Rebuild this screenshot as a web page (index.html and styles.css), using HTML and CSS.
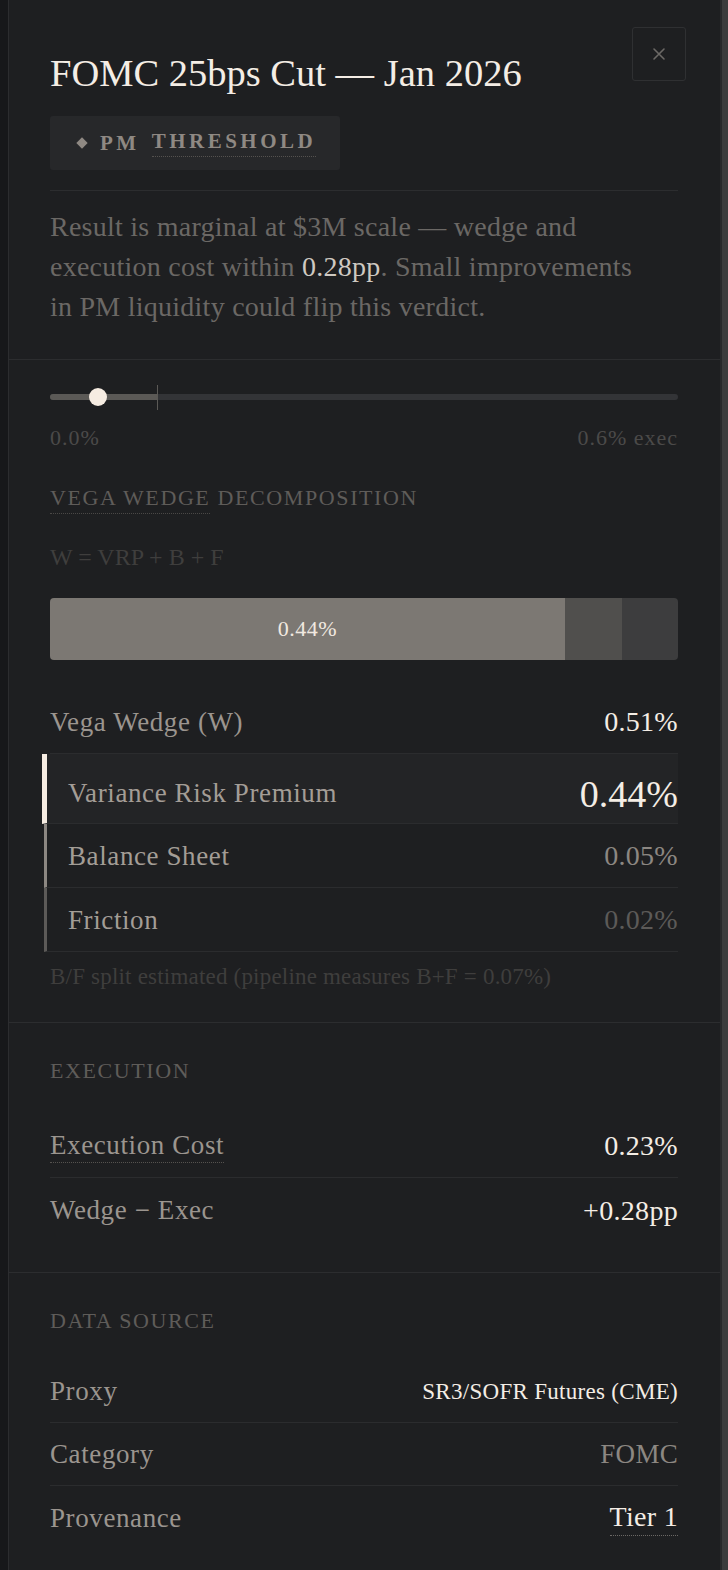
FILE: index.html
```html
<!DOCTYPE html>
<html lang="en">
<head>
    <meta charset="UTF-8">
    <meta name="viewport" content="width=device-width, initial-scale=1.0">
    <title>FOMC 25bps Cut — Jan 2026</title>
    <link rel="stylesheet" href="styles.css">
</head>
<body>
    <div class="shell">
        <div class="gutter"></div>
        <aside class="drawer">
            <button type="button" class="close-btn" aria-label="Close">
                <svg width="14" height="14" viewBox="0 0 14 14"><path d="M2 2 L12 12 M12 2 L2 12" stroke="currentColor" stroke-width="1.6" stroke-linecap="round"/></svg>
            </button>

            <!-- Title, verdict badge and summary -->
            <section class="section head">
                <h1>FOMC 25bps Cut — Jan 2026</h1>
                <div class="badge">
                    <span class="diamond"></span>
                    <span>PM</span>
                    <span class="dotted">THRESHOLD</span>
                </div>
                <hr class="rule">
                <p class="summary">Result is marginal at $3M scale — wedge and execution cost within <span class="hl">0.28pp</span>. Small improvements in PM liquidity could flip this verdict.</p>
            </section>

            <!-- Execution slider and wedge decomposition -->
            <section class="section wedge">
                <div class="slider">
                    <div class="track"><div class="fill" style="width: 107px"></div></div>
                    <span class="tick" style="left: 107px"></span>
                    <span class="thumb" style="left: 39px"></span>
                </div>
                <div class="slider-labels">
                    <span>0.0%</span>
                    <span>0.6% exec</span>
                </div>

                <h3 class="sec-title"><span class="dotted">VEGA WEDGE</span> DECOMPOSITION</h3>
                <div class="formula">W = VRP + B + F</div>

                <div class="stack">
                    <div class="seg seg-vrp" style="width: 82%">0.44%</div>
                    <div class="seg seg-b" style="width: 9.1%"></div>
                    <div class="seg seg-f" style="width: 8.9%"></div>
                </div>

                <div class="row">
                    <span class="label">Vega Wedge (W)</span>
                    <span class="value">0.51%</span>
                </div>
                <div class="row part part-vrp">
                    <span class="label">Variance Risk Premium</span>
                    <span class="value big">0.44%</span>
                </div>
                <div class="row part part-b">
                    <span class="label">Balance Sheet</span>
                    <span class="value mid">0.05%</span>
                </div>
                <div class="row part part-f">
                    <span class="label">Friction</span>
                    <span class="value dim">0.02%</span>
                </div>
                <p class="note">B/F split estimated (pipeline measures B+F = 0.07%)</p>
            </section>

            <section class="section block">
                <h3 class="sec-title">EXECUTION</h3>
                <div class="row">
                    <span class="label dotted">Execution Cost</span>
                    <span class="value">0.23%</span>
                </div>
                <div class="row last">
                    <span class="label">Wedge − Exec</span>
                    <span class="value">+0.28pp</span>
                </div>
            </section>

            <section class="section block source">
                <h3 class="sec-title">DATA SOURCE</h3>
                <div class="row">
                    <span class="label">Proxy</span>
                    <span class="value small">SR3/SOFR Futures (CME)</span>
                </div>
                <div class="row">
                    <span class="label">Category</span>
                    <span class="value mid cat">FOMC</span>
                </div>
                <div class="row last">
                    <span class="label">Provenance</span>
                    <span class="value dotted tier">Tier 1</span>
                </div>
            </section>
        </aside>
        <div class="scrollbar"></div>
    </div>
</body>
</html>
```

FILE: styles.css
```css
body { margin: 0; background: #17181a; font-family: "Liberation Serif", "Times New Roman", serif; color: #9b958f; }
.shell { display: flex; min-height: 1570px; }
.gutter { width: 8px; flex: none; }
.drawer { position: relative; width: 711px; flex: none; background: #1e1f21; border-left: 1px solid #2c2d2f; }
.scrollbar { width: 6px; flex: none; background: #3c3c3d; border-left: 2px solid #28292b; }

.close-btn { position: absolute; top: 27px; right: 34px; width: 54px; height: 54px; display: flex; align-items: center; justify-content: center; background: transparent; border: 1px solid #2f3032; border-radius: 3px; color: #6c6966; padding: 0; cursor: pointer; }

.section { padding: 0 42px 0 41px; border-bottom: 1px solid #2c2d2f; }
.dotted { border-bottom: 1px dotted #55524f; }

/* header */
.head { padding-top: 50px; padding-bottom: 32px; }
h1 { margin: 0; font-size: 38.5px; line-height: 46px; font-weight: normal; color: #f4ede5; }
.badge { display: inline-flex; align-items: center; gap: 12px; height: 54px; margin-top: 20px; padding: 0 24px 0 28px; background: #27282a; border-radius: 3px; color: #8f8983; font-size: 21px; font-weight: bold; letter-spacing: 3.5px; }
.badge .dotted { padding-bottom: 2px; }
.diamond { width: 8px; height: 8px; background: #8f8983; transform: rotate(45deg); margin-right: 2px; }
.rule { border: 0; border-top: 1px solid #2c2d2f; margin: 20px 0 0; }
.summary { max-width: 600px; margin: 16px 0 0; font-size: 28px; line-height: 40px; letter-spacing: 0.25px; color: #6b6865; }
.summary .hl { color: #cfc9c2; }

/* slider */
.wedge { padding-bottom: 31px; }
.slider { position: relative; padding-top: 34px; }
.track { height: 6px; border-radius: 3px; background: #333437; overflow: hidden; }
.fill { height: 100%; background: #5b5956; }
.tick { position: absolute; top: 25px; width: 1px; height: 25px; background: #5b5956; }
.thumb { position: absolute; top: 28px; width: 18px; height: 18px; border-radius: 50%; background: #f6ece2; }
.slider-labels { display: flex; justify-content: space-between; margin-top: 25px; font-size: 22px; line-height: 26px; letter-spacing: 1px; color: #4b4a49; }

.sec-title { margin: 0; font-size: 22px; line-height: 28px; font-weight: normal; letter-spacing: 1.6px; color: #5f5c59; }
.sec-title .dotted { padding-bottom: 3px; border-bottom-color: #4a4846; }
.wedge .sec-title { margin-top: 33px; }
.formula { margin-top: 30px; font-size: 24px; line-height: 30px; color: #3f3e3d; }

.stack { display: flex; height: 62px; margin-top: 26px; margin-bottom: 30px; border-radius: 4px; overflow: hidden; }
.seg { display: flex; align-items: center; justify-content: center; }
.seg-vrp { background: #7c7873; color: #f1e9e0; font-size: 22px; letter-spacing: 0.5px; }
.seg-b { background: #504f4d; }
.seg-f { background: #3d3d3e; }

/* key/value rows */
.row { box-sizing: border-box; display: flex; justify-content: space-between; align-items: center; height: 64px; padding-top: 1px; border-bottom: 1px solid #2b2c2e; }
.row.last { border-bottom: none; }
.label { font-size: 27px; letter-spacing: 0.6px; color: #9b958f; }
.label.dotted { padding-bottom: 1px; }
.value { font-size: 28px; letter-spacing: 0.3px; color: #f4ede5; }
.value.big { font-size: 38px; letter-spacing: 0; }
.value.mid { color: #8c8782; }
.value.dim { color: #5c5a58; }
.value.small { font-size: 23px; }
.value.cat { font-size: 27px; }
.value.tier { padding-bottom: 2px; border-bottom-color: #6b6865; }

.part { padding-left: 21px; }
.part .label { color: #a39d96; }
.part-vrp { height: 70px; padding-top: 10px; margin-left: -8px; border-left: 5px solid #f6ece2; background: #232426; }
.part-b { margin-left: -6px; border-left: 3px solid #8c8782; }
.part-f { margin-left: -6px; border-left: 3px solid #5c5a58; }

.note { margin: 11px 0 0; font-size: 23px; line-height: 28px; letter-spacing: 0.2px; color: #3f3e3d; }

.block { padding-top: 34px; padding-bottom: 30px; }
.block .sec-title { margin-bottom: 29px; }
.source { border-bottom: none; }
.source .sec-title { margin-bottom: 25px; }
.source .row { height: 63px; }
```
